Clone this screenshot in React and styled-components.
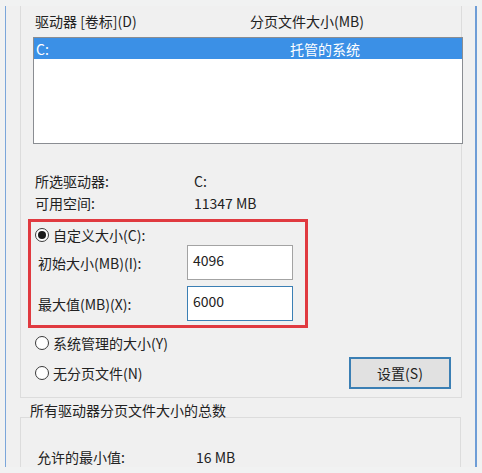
import React from 'react'
import styled, { createGlobalStyle } from 'styled-components'

const Global = createGlobalStyle`
  html, body {
    margin: 0;
    padding: 0;
    background: #f1f2f2;
  }
  body {
    font-family: "Noto Sans CJK SC", "Noto Sans", sans-serif;
    font-size: 14px;
    color: #222;
  }
`

const Window = styled.div`
  box-sizing: border-box;
  margin: 6px 0 0 5px;
  width: 472px;
  height: 461px;
  padding-left: 14px;
  background: #f0f0f0;
  border-left: 1px solid #7ba6da;
  border-right: 2px solid #6e9dd6;
  overflow: hidden;
`

const Group = styled.div`
  box-sizing: border-box;
  width: 442px;
  height: 392px;
  padding: 6px 10px 0 14px;
  border: 1px solid #dcdcdc;
  border-top: none;
`

const Row = styled.div`
  display: flex;
  align-items: center;
  height: ${p => p.$h || 22}px;
  margin-top: ${p => p.$mt || 0}px;
  margin-left: ${p => p.$ml || 0}px;
  line-height: 18px;
  white-space: nowrap;
`

const Cell = styled.span`
  display: inline-block;
  width: ${p => p.$w}px;
  flex: none;
`

const ListBox = styled.div`
  box-sizing: border-box;
  width: 430px;
  height: 107px;
  margin: 7px 0 0 -2px;
  background: #fff;
  border: 1px solid #8a8d92;
`

const ListItem = styled.div`
  display: flex;
  align-items: center;
  height: 21px;
  padding-left: 2px;
  background: ${p => (p.$selected ? '#3b90e6' : 'transparent')};
  color: ${p => (p.$selected ? '#fff' : '#222')};
  white-space: nowrap;
`

const Highlight = styled.div`
  box-sizing: border-box;
  width: 280px;
  height: 109px;
  margin: 5px 0 0 -7px;
  padding-top: 3px;
  border: 3px solid #e03a40;
`

const RadioRow = styled.label`
  display: flex;
  align-items: center;
  gap: 4px;
  height: 20px;
  margin-left: ${p => p.$ml || 0}px;
  white-space: nowrap;
`

const RadioDot = styled.span`
  box-sizing: border-box;
  width: 14px;
  height: 14px;
  border-radius: 50%;
  border: 1px solid #3a3a3a;
  background: #fff;
  display: flex;
  align-items: center;
  justify-content: center;
  &::after {
    content: '';
    width: 8px;
    height: 8px;
    border-radius: 50%;
    background: ${p => (p.$checked ? '#1a1a1a' : 'transparent')};
  }
`

const Field = styled.div`
  display: flex;
  align-items: center;
  height: 35px;
  margin-top: ${p => p.$mt || 0}px;
  padding-left: 7px;
  white-space: nowrap;
`

const Input = styled.div`
  box-sizing: border-box;
  width: 106px;
  height: 35px;
  padding: 4px 0 0 5px;
  line-height: 20px;
  background: #fff;
  border: 1px solid ${p => (p.$focus ? '#3b7fb4' : '#a3a3a3')};
`

const ButtonRow = styled.div`
  display: flex;
  align-items: center;
  justify-content: space-between;
  height: 32px;
  margin-top: 4px;
`

const Button = styled.div`
  box-sizing: border-box;
  width: 102px;
  height: 32px;
  display: flex;
  align-items: center;
  justify-content: center;
  background: #e1e1e1;
  border: 2px solid #3b7fb4;
`

const Totals = styled.fieldset`
  box-sizing: border-box;
  width: 441px;
  margin: 3px 0 0 0;
  padding: 0 0 20px 9px;
  border: 1px solid #dcdcdc;
`

const Legend = styled.legend`
  padding: 0 0 14px 0;
  line-height: 18px;
`

export default function App() {
  return (
    <>
      <Global />
      <Window>
        <Group>
          <Row $h={18}>
            <Cell $w={215}>驱动器 [卷标](D)</Cell>
            <span>分页文件大小(MB)</span>
          </Row>
          <ListBox>
            <ListItem $selected>
              <Cell $w={254}>C:</Cell>
              <span>托管的系统</span>
            </ListItem>
          </ListBox>

          <Row $mt={26}>
            <Cell $w={159}>所选驱动器:</Cell>
            <span>C:</span>
          </Row>
          <Row>
            <Cell $w={159}>可用空间:</Cell>
            <span>11347 MB</span>
          </Row>

          <Highlight>
            <RadioRow $ml={4}>
              <RadioDot $checked />
              自定义大小(C):
            </RadioRow>
            <Field>
              <Cell $w={149}>初始大小(MB)(I):</Cell>
              <Input>4096</Input>
            </Field>
            <Field $mt={6}>
              <Cell $w={149}>最大值(MB)(X):</Cell>
              <Input $focus>6000</Input>
            </Field>
          </Highlight>

          <Row $h={20} $mt={5}>
            <RadioRow>
              <RadioDot />
              系统管理的大小(Y)
            </RadioRow>
          </Row>
          <ButtonRow>
            <RadioRow>
              <RadioDot />
              无分页文件(N)
            </RadioRow>
            <Button>设置(S)</Button>
          </ButtonRow>
        </Group>

        <Totals>
          <Legend>所有驱动器分页文件大小的总数</Legend>
          <Row $mt={13} $ml={7}>
            <Cell $w={159}>允许的最小值:</Cell>
            <span>16 MB</span>
          </Row>
        </Totals>
      </Window>
    </>
  )
}
